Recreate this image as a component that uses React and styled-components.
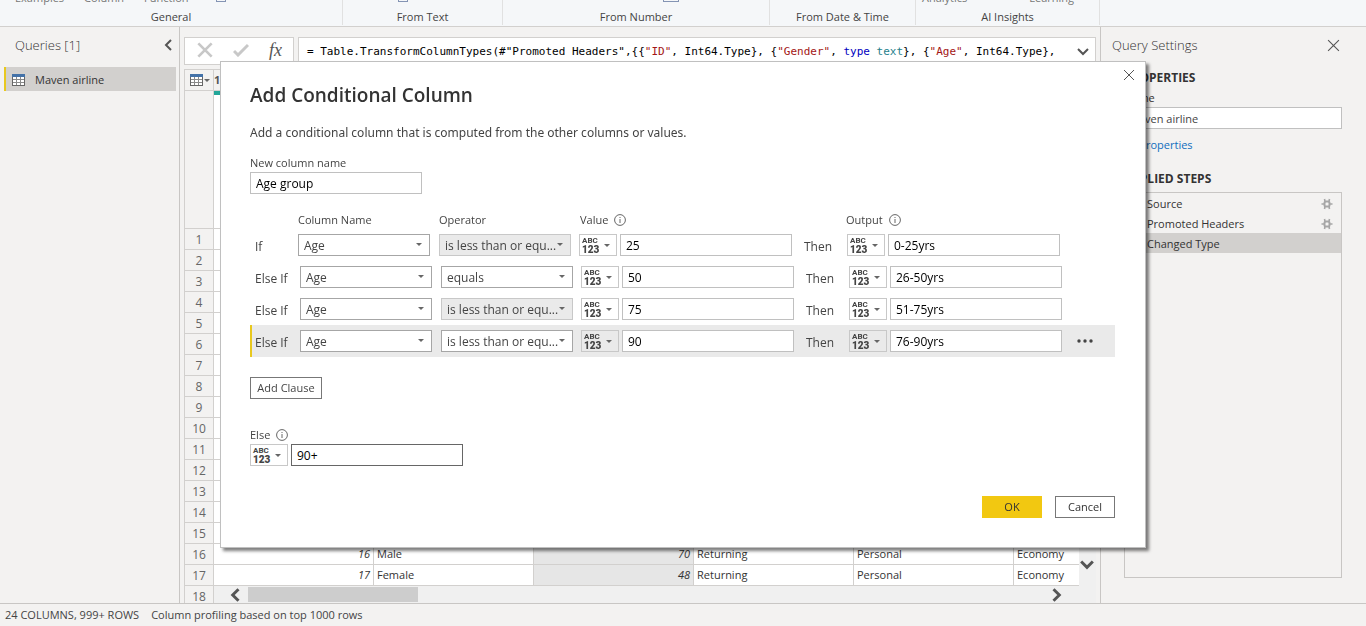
import React from 'react';
import styled, { createGlobalStyle } from 'styled-components';

const GlobalStyle = createGlobalStyle`
    *{
        box-sizing: border-box;
    }
    body{
        margin: 0;
        background-color: #f3f2f1;
        color: #444444;
        font-family: "Open Sans", "Noto Sans", sans-serif;
        font-size: 12px;
        line-height: 16px;
    }
    button, input, select{
        font: inherit;
        color: inherit;
    }
`;

const clauses = [
    { label: 'If', operator: 'is less than or equ...', dim: true, value: '25', output: '0-25yrs' },
    { label: 'Else If', operator: 'equals', value: '50', output: '26-50yrs' },
    { label: 'Else If', operator: 'is less than or equ...', dim: true, value: '75', output: '51-75yrs' },
    { label: 'Else If', operator: 'is less than or equ...', value: '90', output: '76-90yrs', active: true },
];

const rows = Array.from({ length: 18 }, (_, i) => ({ id: i + 1 }));
rows[15] = { id: 16, gender: 'Male', age: 70, customer: 'Returning', travel: 'Personal', flight: 'Economy' };
rows[16] = { id: 17, gender: 'Female', age: 48, customer: 'Returning', travel: 'Personal', flight: 'Economy' };

const steps = ['Source', 'Promoted Headers', 'Changed Type'];

const CrossIcon = ({ size = 12, width = 1 }) => (
    <svg width={size} height={size} viewBox="0 0 12 12" fill="none" stroke="currentColor" strokeWidth={width}>
        <path d="M1 1L11 11M11 1L1 11" />
    </svg>
);

const ChevronIcon = ({ turn = 0, size = 12, width = 2 }) => (
    <svg width={size} height={size} viewBox="0 0 12 12" fill="none" stroke="currentColor" strokeWidth={width}>
        <path d="M1 3L6 8L11 3" transform={`rotate(${turn} 6 6)`} />
    </svg>
);

const CaretIcon = () => (
    <svg width="6" height="3" viewBox="0 0 6 3"><path d="M0 0H6L3 3Z" fill="#666666" /></svg>
);

const InfoIcon = () => (
    <svg width="12" height="12" viewBox="0 0 12 12" fill="none" stroke="#666666">
        <circle cx="6" cy="6" r="5.4" />
        <path d="M6 5V9M6 3V4" />
    </svg>
);

const GridIcon = () => (
    <svg width="13" height="12" viewBox="0 0 13 12">
        <rect x="0.5" y="0.5" width="12" height="11" fill="#ffffff" stroke="#666666" />
        <rect width="13" height="3" fill="#4472a8" />
        <path d="M4.5 3V11M8.5 3V11M1 5.5H12M1 8.5H12" stroke="#8a8a8a" />
    </svg>
);

const GearIcon = () => (
    <svg width="12" height="12" viewBox="0 0 12 12" fill="none" stroke="#a6a6a6" strokeWidth="2">
        <rect x="3.5" y="3.5" width="5" height="5" rx="1.5" />
        <path d="M4 3.5L3.5 1M8 3.5L8.5 1M4 8.5L3.5 11M8 8.5L8.5 11M3 6H0.5M9 6H11.5" strokeWidth="1.6" />
    </svg>
);

const TypePicker = ({ label, active }) => (
    <TypeButton type="button" aria-label={label} $active={active}>
        <TypeText><small>ABC</small><b>123</b></TypeText>
        <CaretIcon />
    </TypeButton>
);

const Dropdown = ({ label, value, dim }) => (
    <SelectWrap>
        <Select aria-label={label} defaultValue={value} $dim={dim}>
            <option>{value}</option>
        </Select>
        <CaretIcon />
    </SelectWrap>
);

const Clause = ({ label, operator, dim, value, output, active }) => (
    <ClauseRow $first={label === 'If'} $active={active}>
        <ClauseWord $first={label === 'If'}>{label}</ClauseWord>
        <Dropdown label="Column Name" value="Age" />
        <Dropdown label="Operator" value={operator} dim={dim} />
        <Pair>
            <TypePicker label="Value type" active={active} />
            <TextBox aria-label="Value" defaultValue={value} />
        </Pair>
        <ThenWord>Then</ThenWord>
        <Pair>
            <TypePicker label="Output type" active={active} />
            <TextBox aria-label="Output" defaultValue={output} />
        </Pair>
        {active && <MoreButton type="button" aria-label="More">
            <svg width="16" height="4" viewBox="0 0 16 4" fill="#444444">
                <circle cx="2" cy="2" r="1.7" /><circle cx="8" cy="2" r="1.7" /><circle cx="14" cy="2" r="1.7" />
            </svg>
        </MoreButton>}
    </ClauseRow>
);

const ConditionalDialog = () => (
    <Overlay>
        <Dialog role="dialog" aria-labelledby="dialog-title">
            <DialogClose type="button" aria-label="Close"><CrossIcon /></DialogClose>
            <Title id="dialog-title">Add Conditional Column</Title>
            <Description>Add a conditional column that is computed from the other columns or values.</Description>
            <FieldLabel htmlFor="column-name">New column name</FieldLabel>
            <TextBox id="column-name" defaultValue="Age group" />
            <Headings>
                <span>Column Name</span>
                <span>Operator</span>
                <span>Value <InfoIcon /></span>
                <span>Output <InfoIcon /></span>
            </Headings>
            {clauses.map((clause, i) => <Clause key={i} {...clause} />)}
            <AddButton type="button">Add Clause</AddButton>
            <FieldLabel htmlFor="else-value">Else <InfoIcon /></FieldLabel>
            <Pair>
                <TypePicker label="Else type" />
                <TextBox id="else-value" defaultValue="90+" $focused />
            </Pair>
            <Actions>
                <DialogButton type="button" $primary>OK</DialogButton>
                <DialogButton type="button">Cancel</DialogButton>
            </Actions>
        </Dialog>
    </Overlay>
);

const DataGrid = () => (
    <GridArea>
        <Table>
            <colgroup>
                <col width="29" />
                <col width="160" />
                <col width="160" />
                <col width="160" />
                <col width="160" />
                <col width="160" />
                <col />
            </colgroup>
            <thead>
                <HeadRow>
                    <th><Corner><GridIcon /><CaretIcon /></Corner></th>
                    <th><TypeMark>1</TypeMark></th>
                    <th /><th /><th /><th /><th />
                </HeadRow>
                <ProfileRow>
                    <th />
                    <td><QualityBar /></td>
                    <td /><td /><td /><td /><td />
                </ProfileRow>
            </thead>
            <tbody>
                {rows.map((row) => (
                    <tr key={row.id}>
                        <th scope="row">{row.id}</th>
                        <NumberCell>{row.gender && row.id}</NumberCell>
                        <td>{row.gender}</td>
                        <NumberCell $selected>{row.age}</NumberCell>
                        <td>{row.customer}</td>
                        <td>{row.travel}</td>
                        <td>{row.flight}</td>
                    </tr>
                ))}
            </tbody>
        </Table>
        <VerticalBar><ChevronIcon size={14} width={2.5} /></VerticalBar>
        <HorizontalBar>
            <ChevronIcon turn={90} size={14} width={2.5} />
            <Thumb />
            <ChevronIcon turn={-90} size={14} width={2.5} />
        </HorizontalBar>
    </GridArea>
);

const App = () => (
    <Shell>
        <GlobalStyle />
        <Ribbon>
            <Group $width={343}>
                <Clipped $left={15} $gap={20}><span>Examples</span><span>Column</span><span>Function</span><Tile $spaced /></Clipped>
                General
            </Group>
            <Group $width={160}><Clipped $left={55}><Tile /></Clipped>From Text</Group>
            <Group $width={267}><Clipped $left={160}><Tile $wide /></Clipped>From Number</Group>
            <Group $width={146}>From Date &amp; Time</Group>
            <Group $width={184}>
                <Clipped $left={6} $gap={62}><span>Analytics</span><span>Learning</span></Clipped>
                AI Insights
            </Group>
        </Ribbon>
        <Main>
            <Queries>
                <PanelHead>Queries [1]<PlainButton type="button" aria-label="Collapse"><ChevronIcon turn={90} /></PlainButton></PanelHead>
                <Query><GridIcon />Maven airline</Query>
            </Queries>
            <Workspace>
                <FormulaRow>
                    <FormulaTools>
                        <PlainButton type="button" aria-label="Cancel edit" $light><CrossIcon size={16} width={2} /></PlainButton>
                        <PlainButton type="button" aria-label="Commit edit" $light>
                            <svg width="16" height="14" viewBox="0 0 16 14" fill="none" stroke="currentColor" strokeWidth="3"><path d="M1 8L5 12L15 2" /></svg>
                        </PlainButton>
                        <Fx>fx</Fx>
                    </FormulaTools>
                    <Formula>
                        <code>
                            {'= Table.TransformColumnTypes(#"Promoted Headers",{{'}<Str>"ID"</Str>{', Int64.Type}, {'}
                            <Str>"Gender"</Str>, <Kw>type</Kw> <Ty>text</Ty>{'}, {'}<Str>"Age"</Str>{', Int64.Type},'}
                        </code>
                        <PlainButton type="button" aria-label="Expand formula"><ChevronIcon /></PlainButton>
                    </Formula>
                </FormulaRow>
                <DataGrid />
            </Workspace>
            <Settings>
                <PanelHead>Query Settings<PlainButton type="button" aria-label="Close settings"><CrossIcon size={13} /></PlainButton></PanelHead>
                <SettingsBody>
                    <h2>PROPERTIES</h2>
                    <label htmlFor="query-name">Name</label>
                    <NameBox id="query-name" defaultValue="Maven airline" />
                    <a href="#properties">All Properties</a>
                    <h2>APPLIED STEPS</h2>
                    <Steps>
                        {steps.map((step, i) => (
                            <Step key={step} $selected={i === 2}>{step}{i < 2 && <GearIcon />}</Step>
                        ))}
                    </Steps>
                </SettingsBody>
            </Settings>
        </Main>
        <Status><span>24 COLUMNS, 999+ ROWS</span><span>Column profiling based on top 1000 rows</span></Status>
        <ConditionalDialog />
    </Shell>
);

const Shell = styled.div`
    display: flex;
    flex-direction: column;
    height: 100vh;
    overflow: hidden;
`;

const Ribbon = styled.header`
    display: flex;
    height: 27px;
    flex-shrink: 0;
    background-color: #f5f7f9;
    border-bottom: 1px solid #d2d0ce;
    overflow: hidden;
`;

const Group = styled.div`
    width: ${props => props.$width}px;
    height: 25px;
    display: flex;
    flex-direction: column;
    align-items: center;
    justify-content: flex-end;
    font-size: 11px;
    border-right: 1px solid #e1e1e1;
`;

const Clipped = styled.div`
    display: flex;
    align-self: stretch;
    align-items: flex-end;
    gap: ${props => props.$gap}px;
    padding: 0 0 3px ${props => props.$left}px;
    color: #777777;
    height: 9px;
`;

const Tile = styled.i`
    width: ${props => props.$wide ? 16 : 10}px;
    height: 10px;
    margin: 0 0 4px ${props => props.$spaced ? 7 : 0}px;
    border: 1px solid #8494b4;
`;

const Main = styled.main`
    flex: 1;
    min-height: 0;
    display: flex;
`;

const Queries = styled.aside`
    width: 180px;
    flex-shrink: 0;
    padding: 10px 3px 10px 4px;
    border-right: 1px solid #c8c6c4;
`;

const PanelHead = styled.div`
    display: flex;
    justify-content: space-between;
    align-items: center;
    padding: 0 2px 0 11px;
    font-size: 13px;
    font-weight: 300;
    color: #333333;
`;

const PlainButton = styled.button`
    display: flex;
    padding: 0;
    border: none;
    background: none;
    color: ${props => props.$light ? '#c8c8c8' : '#555555'};
`;

const Query = styled.div`
    display: flex;
    align-items: center;
    gap: 10px;
    height: 24px;
    margin-top: 14px;
    padding: 1px 0 0 6px;
    border-left: 2px solid #e8c81e;
    background-color: #d2d0ce;
    font-size: 11px;
    color: #333333;
`;

const Workspace = styled.section`
    flex: 1;
    min-width: 0;
    display: flex;
    flex-direction: column;
    padding: 10px 4px 0;
`;

const FormulaRow = styled.div`
    display: flex;
    gap: 4px;
    height: 28px;
    margin-bottom: 4px;
`;

const FormulaTools = styled.div`
    width: 110px;
    display: flex;
    align-items: center;
    justify-content: space-between;
    padding: 0 11px 2px 12px;
    background-color: #ffffff;
    border: 1px solid #d2d0ce;
`;

const Fx = styled.i`
    font-family: "Liberation Serif", serif;
    font-size: 18px;
    color: #555555;
`;

const Formula = styled.div`
    flex: 1;
    display: flex;
    align-items: center;
    justify-content: space-between;
    padding: 2px 6px 0 8px;
    background-color: #ffffff;
    border: 1px solid #d2d0ce;
    color: #000000;
    white-space: pre;
    code{
        font-family: "DejaVu Sans Mono", monospace;
        font-size: 11px;
    }
`;

const Str = styled.span`
    color: #a31515;
`;

const Kw = styled.span`
    color: #0000c0;
`;

const Ty = styled.span`
    color: #267f8c;
`;

const GridArea = styled.div`
    position: relative;
    flex: 1;
    min-height: 0;
    overflow: hidden;
    border-left: 1px solid #d2d0ce;
    border-top: 1px solid #d2d0ce;
`;

const Table = styled.table`
    width: 100%;
    table-layout: fixed;
    border-collapse: separate;
    border-spacing: 0;
    background-color: #ffffff;
    font-size: 11px;
    color: #333333;
    th, td{
        height: 21px;
        padding: 0 3px;
        border-right: 1px solid #d2d0ce;
        border-bottom: 1px solid #d2d0ce;
        text-align: left;
        font-weight: normal;
    }
    th{
        background-color: #f3f2f1;
        font-size: 12px;
        color: #666666;
    }
    tbody th{
        padding-top: 2px;
        text-align: center;
    }
`;

const HeadRow = styled.tr`
    && th{
        padding: 0;
    }
`;

const Corner = styled.div`
    display: flex;
    align-items: center;
    gap: 1px;
    padding-left: 5px;
`;

const TypeMark = styled.b`
    display: block;
    font-size: 11px;
    color: #555555;
`;

const ProfileRow = styled.tr`
    && th, && td{
        height: 138px;
        padding: 0;
        vertical-align: top;
    }
`;

const QualityBar = styled.div`
    height: 4px;
    background-color: #22a699;
`;

const NumberCell = styled.td`
    &&{
        text-align: right;
    }
    font-style: italic;
    background-color: ${props => props.$selected ? '#e6e6e6' : '#ffffff'};
`;

const VerticalBar = styled.div`
    position: absolute;
    top: 0;
    right: 0;
    bottom: 17px;
    width: 17px;
    display: flex;
    align-items: flex-end;
    padding: 0 1px 14px;
    background-color: #f0f0f0;
    color: #555555;
`;

const HorizontalBar = styled.div`
    position: absolute;
    left: 29px;
    right: 0;
    bottom: 0;
    height: 17px;
    display: flex;
    align-items: center;
    gap: 6px;
    padding: 0 32px 0 14px;
    background-color: #f0f0f0;
    color: #555555;
    svg:last-child{
        margin-left: auto;
    }
`;

const Thumb = styled.div`
    width: 170px;
    height: 15px;
    background-color: #cdcdcd;
`;

const Settings = styled.aside`
    width: 266px;
    flex-shrink: 0;
    display: flex;
    flex-direction: column;
    padding: 10px 24px 25px 0;
    border-left: 1px solid #c8c6c4;
    color: #333333;
`;

const SettingsBody = styled.div`
    flex: 1;
    display: flex;
    flex-direction: column;
    padding-left: 23px;
    h2{
        margin: 16px 0 4px;
        font-size: 12px;
        line-height: 18px;
    }
    label, a{
        font-size: 11px;
    }
    label{
        line-height: 14px;
        padding-bottom: 2px;
    }
    a{
        margin-top: 8px;
        padding-bottom: 1px;
        color: #106ebe;
        text-decoration: none;
    }
`;

const Steps = styled.ul`
    flex: 1;
    margin: 0;
    padding: 0;
    list-style: none;
    border: 1px solid #c8c6c4;
    font-size: 11px;
`;

const Step = styled.li`
    display: flex;
    align-items: center;
    justify-content: space-between;
    height: 20px;
    padding: 2px 8px 0 22px;
    background-color: ${props => props.$selected ? '#d2d0ce' : 'transparent'};
`;

const Status = styled.footer`
    display: flex;
    gap: 12px;
    height: 23px;
    flex-shrink: 0;
    padding: 3px 5px;
    border-top: 1px solid #c8c6c4;
    font-size: 11px;
`;

const Overlay = styled.div`
    position: fixed;
    inset: 0;
    display: flex;
    align-items: flex-start;
    justify-content: center;
    padding-top: 61px;
`;

const Dialog = styled.section`
    position: relative;
    width: 926px;
    padding: 20px 30px 29px 29px;
    background-color: #ffffff;
    border: 1px solid #c0c0c0;
    box-shadow: 3px 3px 3px rgba(0, 0, 0, 0.5);
`;

const DialogClose = styled.button`
    position: absolute;
    top: 7px;
    right: 10px;
    display: flex;
    padding: 0;
    border: none;
    background: none;
    color: #555555;
`;

const Title = styled.h1`
    margin: 0;
    font-size: 19px;
    line-height: 26px;
    font-weight: 600;
    color: #333333;
`;

const Description = styled.p`
    margin: 16px 0 13px;
    font-family: "Noto Sans", sans-serif;
    line-height: 18px;
`;

const FieldLabel = styled.label`
    display: flex;
    align-items: center;
    gap: 6px;
    padding-bottom: 1px;
    font-size: 11px;
    line-height: 16px;
`;

const TextBox = styled.input`
    display: block;
    width: 172px;
    height: 22px;
    padding: 1px 5px 0;
    border: 1px solid ${props => props.$focused ? '#666666' : '#c0c0c0'};
    background-color: #ffffff;
    color: #000000;
`;

const NameBox = styled(TextBox)`
    width: 100%;
    padding: 1px 4px 0;
    font-size: 11px;
    color: #444444;
`;

const Headings = styled.div`
    display: grid;
    grid-template-columns: 141px 141px 266px 1fr;
    padding-left: 48px;
    margin: 18px 0 1px;
    font-size: 11px;
    span{
        display: flex;
        align-items: center;
        gap: 6px;
    }
`;

const ClauseRow = styled.div`
    display: flex;
    align-items: center;
    height: 32px;
    border-left: ${props => props.$first ? 0 : 2}px solid ${props => props.$active ? '#e8c81e' : 'transparent'};
    background-color: ${props => props.$active ? '#eaeaea' : 'transparent'};
`;

const ClauseWord = styled.span`
    width: 48px;
    padding: 3px 0 0 ${props => props.$first ? 5 : 3}px;
`;

const ThenWord = styled.span`
    width: 55px;
    padding: 3px 0 0 12px;
`;

const SelectWrap = styled.div`
    position: relative;
    width: 132px;
    margin-right: 9px;
    & + &{
        margin-right: 8px;
    }
    svg{
        position: absolute;
        top: 9px;
        right: 8px;
        pointer-events: none;
    }
`;

const Select = styled.select`
    appearance: none;
    display: block;
    width: 100%;
    height: 22px;
    padding: 2px 12px 0 5px;
    border: 1px solid ${props => props.$dim ? '#c8c8c8' : '#a6a6a6'};
    border-radius: 0;
    background-color: ${props => props.$dim ? '#eaeaea' : '#ffffff'};
`;

const Pair = styled.div`
    display: flex;
    gap: 3px;
`;

const TypeButton = styled.button`
    display: flex;
    align-items: center;
    justify-content: space-between;
    width: 38px;
    height: 22px;
    padding: 0 6px 0 2px;
    border: 1px solid #c8c8c8;
    background-color: ${props => props.$active ? '#eaeaea' : '#ffffff'};
`;

const TypeText = styled.span`
    display: flex;
    flex-direction: column;
    font-family: Roboto, sans-serif;
    font-size: 10px;
    line-height: 10px;
    font-weight: 700;
    text-align: left;
    small{
        font-size: 8px;
        line-height: 9px;
    }
`;

const MoreButton = styled.button`
    display: flex;
    margin-left: 15px;
    padding: 0;
    border: none;
    background: none;
`;

const AddButton = styled.button`
    display: block;
    width: 72px;
    height: 22px;
    margin: 20px 0 28px;
    padding: 0;
    border: 1px solid #777777;
    background-color: #ffffff;
    font-size: 11px;
`;

const Actions = styled.div`
    display: flex;
    justify-content: flex-end;
    gap: 13px;
    margin-top: 30px;
`;

const DialogButton = styled.button`
    width: 60px;
    height: 22px;
    padding: 0;
    border: 1px solid ${props => props.$primary ? '#f2c811' : '#777777'};
    background-color: ${props => props.$primary ? '#f2c811' : '#ffffff'};
    font-size: 11px;
    color: #333333;
`;

export default App;
